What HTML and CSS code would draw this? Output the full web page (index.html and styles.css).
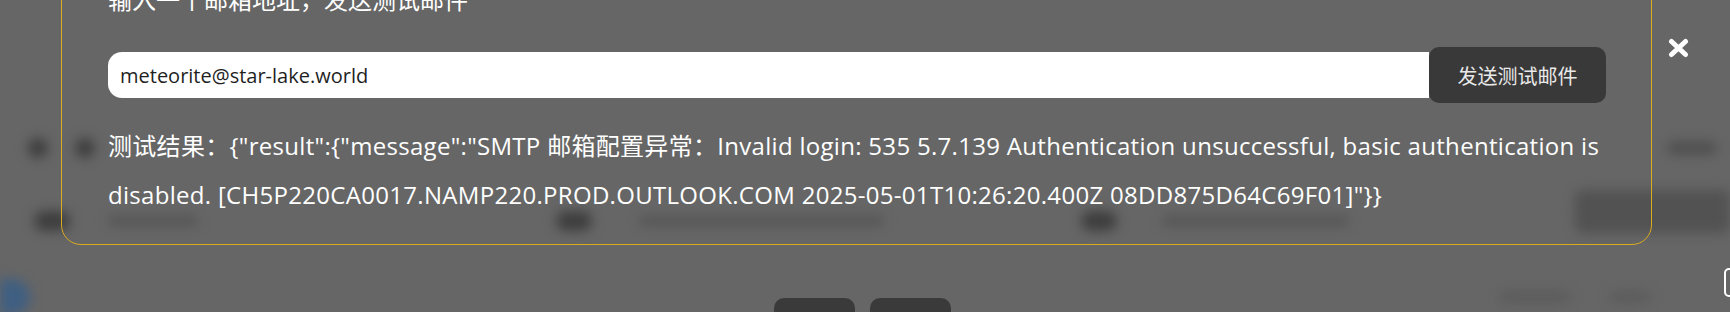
FILE: index.html
```html
<!DOCTYPE html>
<html lang="zh-CN">
<head>
<meta charset="utf-8">
<title>发送测试邮件</title>
<link rel="stylesheet" href="styles.css">
</head>
<body>
<div class="page">
  <div class="row row-a">
    <span class="dot"></span>
    <span class="dot dot-2"></span>
    <span class="blob blob-a"></span>
  </div>
  <div class="row row-b">
    <span class="dot dot-b1"></span>
    <span class="bar bar-1"></span>
    <span class="dot dot-b2"></span>
    <span class="bar bar-2"></span>
    <span class="dot dot-b3"></span>
    <span class="bar bar-3"></span>
    <span class="panel"></span>
  </div>
  <div class="row row-c">
    <span class="avatar"></span>
    <span class="bar bar-4"></span>
    <span class="bar bar-5"></span>
  </div>
</div>

<div class="mask">
  <div class="modal">
    <div class="modal-title">输入一个邮箱地址，发送测试邮件</div>
    <div class="send-row">
      <input class="email-input" type="text" value="meteorite@star-lake.world">
      <button class="send-btn" type="button">发送测试邮件</button>
    </div>
    <div class="result">测试结果：{"result":{"message":"SMTP 邮箱配置异常：Invalid login: 535 5.7.139 Authentication unsuccessful, basic authentication is disabled. [CH5P220CA0017.NAMP220.PROD.OUTLOOK.COM 2025-05-01T10:26:20.400Z 08DD875D64C69F01]"}}</div>
  </div>
  <div class="footer">
    <span class="footer-btn"></span>
    <span class="footer-btn"></span>
  </div>
  <button class="close" type="button" aria-label="关闭">
    <svg width="21" height="20" viewBox="0 0 21 20"><path d="M3.5 3.5 L17.5 16.5 M17.5 3.5 L3.5 16.5" stroke="#ffffff" stroke-width="5" stroke-linecap="round" fill="none"/></svg>
  </button>
  <span class="edge-handle"></span>
</div>
</body>
</html>
```
FILE: styles.css
```css
* { box-sizing: border-box; }
html, body {
  margin: 0;
  padding: 0;
  width: 1730px;
  height: 312px;
  overflow: hidden;
  background: #666666;
  font-family: "Open Sans", "Noto Sans CJK SC", sans-serif;
}
body { position: relative; }

/* blurred page underneath the mask */
.page {
  height: 312px;
  padding-top: 138px;
  filter: blur(6px);
}
.row { display: flex; }
.row-a {
  height: 20px;
  padding-left: 28px;
  padding-right: 13px;
  align-items: center;
}
.dot {
  width: 20px;
  height: 20px;
  border-radius: 50%;
  background: #3e3e3e;
  flex: none;
}
.dot-2 { margin-left: 27px; }
.blob-a {
  margin-left: auto;
  width: 50px;
  height: 14px;
  border-radius: 7px;
  background: #505050;
}
.row-b {
  margin-top: 32px;
  height: 43px;
  padding-left: 34px;
  align-items: flex-end;
}
.row-b .dot { width: 36px; height: 20px; border-radius: 10px; margin-bottom: 2px; }
.dot-b2 { margin-left: 358px; }
.dot-b3 { margin-left: 197px; }
.bar {
  height: 10px;
  border-radius: 5px;
  background: #555555;
  flex: none;
  margin-bottom: 7px;
}
.bar-1 { width: 90px; margin-left: 38px; }
.bar-2 { width: 245px; margin-left: 47px; }
.bar-3 { width: 187px; margin-left: 45px; }
.panel {
  margin-left: 226px;
  flex: 1;
  height: 43px;
  border-radius: 8px;
  background: #525252;
}
.row-c {
  margin-top: 44px;
  height: 40px;
  align-items: center;
}
.avatar {
  width: 30px;
  height: 36px;
  border-radius: 0 18px 18px 0;
  background: #3f5f82;
  flex: none;
}
.bar-4 { width: 70px; margin-left: 1470px; margin-bottom: 0; background: #5a5a5a; }
.bar-5 { width: 40px; margin-left: 40px; margin-bottom: 0; background: #5a5a5a; }

/* overlay */
.mask {
  position: absolute;
  inset: 0;
  display: flex;
  flex-direction: column;
}
.modal {
  margin-top: -60px;
  margin-left: 61px;
  width: 1591px;
  padding: 40px 45px 25px 46px;
  border: 1px solid #dcab1f;
  border-radius: 20px;
  color: #ffffff;
}
.modal-title {
  font-family: "Noto Sans CJK SC", sans-serif;
  font-size: 24px;
  line-height: 36px;
  margin-bottom: 30px;
}
.send-row {
  display: flex;
  align-items: center;
  height: 56px;
}
.email-input {
  flex: 1;
  min-width: 0;
  height: 46px;
  border: none;
  outline: none;
  margin: 0;
  padding: 0 12px;
  border-radius: 14px 0 0 14px;
  background: #ffffff;
  color: #1f1f1f;
  font-family: "Open Sans", "Noto Sans CJK SC", sans-serif;
  font-size: 20px;
}
.send-btn {
  flex: none;
  width: 177px;
  height: 56px;
  border: none;
  margin: 0;
  padding: 0;
  border-radius: 10px;
  background: #393939;
  color: #e9e9e9;
  font-family: "Noto Sans CJK SC", sans-serif;
  font-size: 20px;
  cursor: pointer;
}
.result {
  margin-top: 18px;
  margin-right: -8px;
  font-size: 24px;
  line-height: 49px;
  letter-spacing: 0.3px;
  color: #ffffff;
}
.footer {
  display: flex;
  gap: 15px;
  margin-top: 53px;
  padding-left: 774px;
}
.footer-btn {
  width: 81px;
  height: 40px;
  border-radius: 10px;
  background: #3a3a3a;
}
.close {
  position: absolute;
  left: 1668px;
  top: 38px;
  width: 21px;
  height: 20px;
  padding: 0;
  border: none;
  background: transparent;
  display: block;
}
.close svg { display: block; }
.edge-handle {
  position: absolute;
  left: 1724px;
  top: 268px;
  width: 20px;
  height: 29px;
  border: 2px solid #ffffff;
  border-radius: 5px;
}
```
